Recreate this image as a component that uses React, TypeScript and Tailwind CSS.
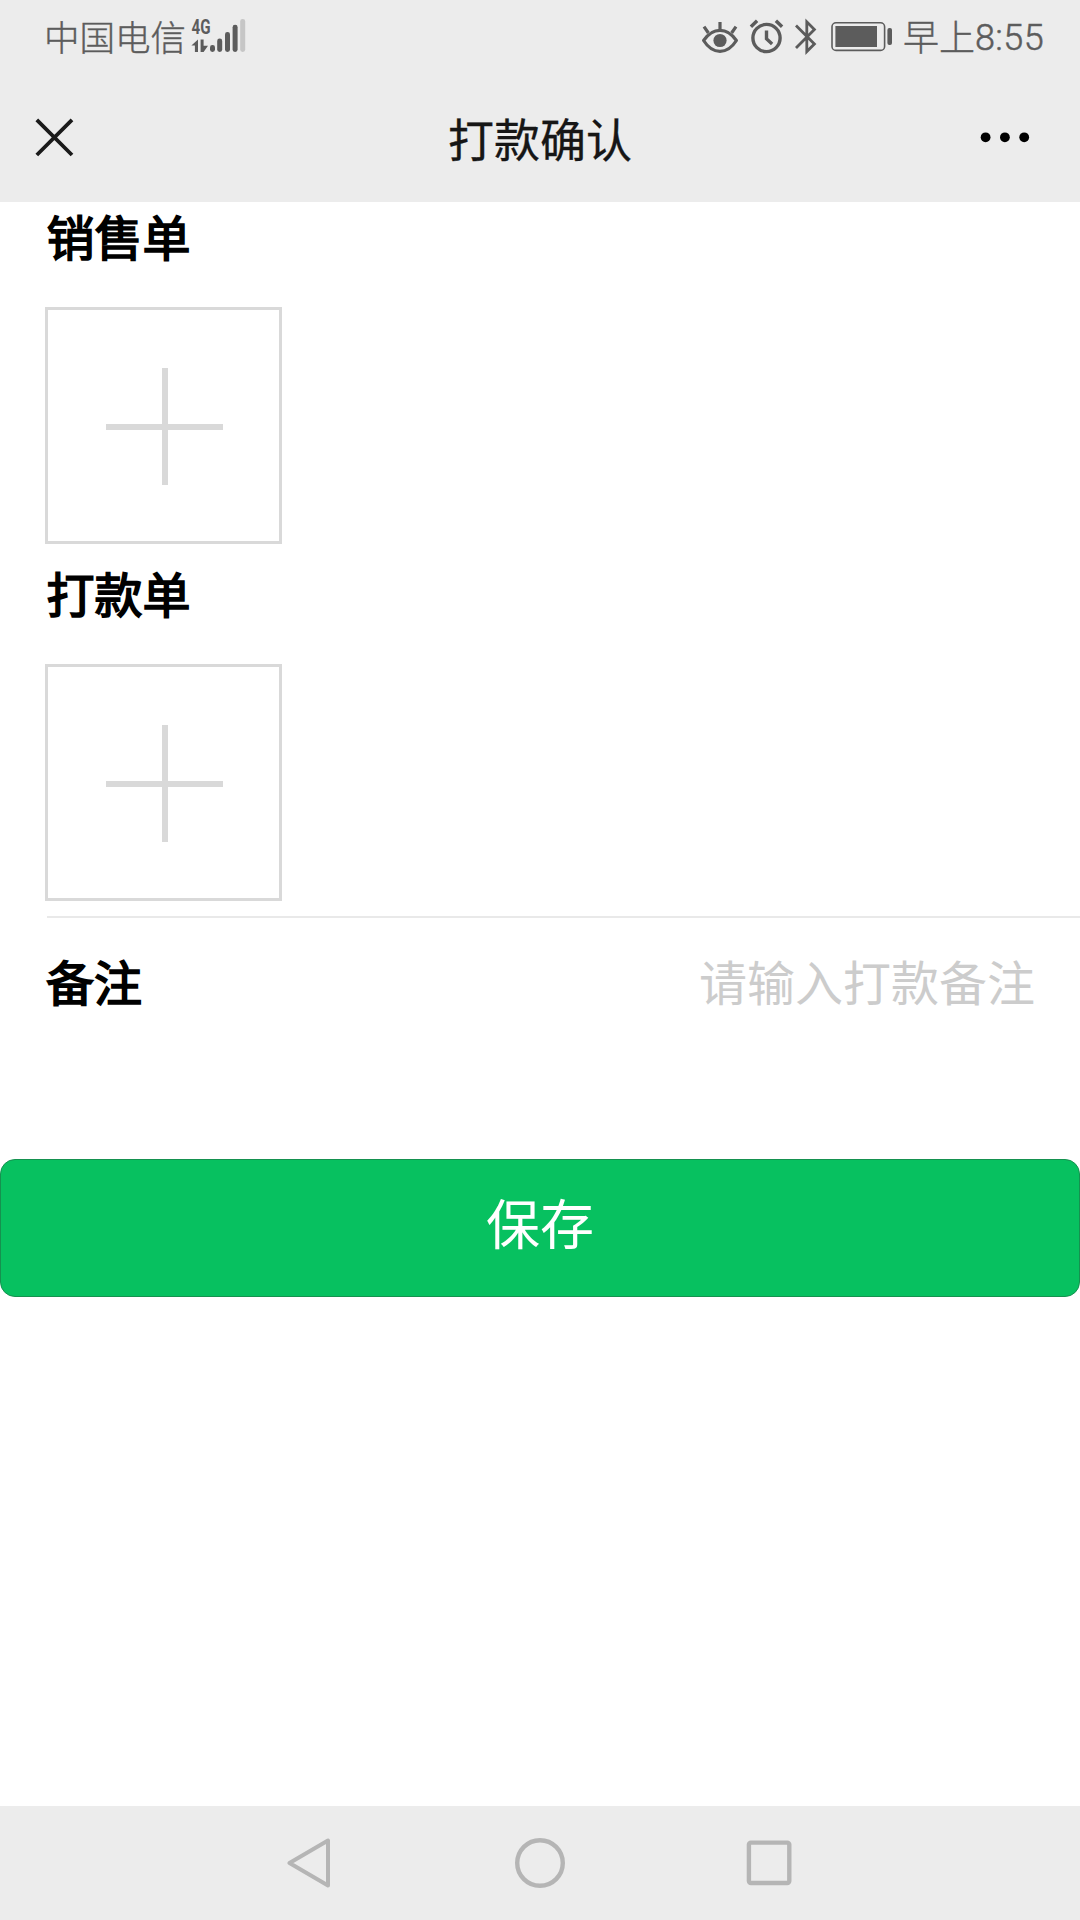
import React from "react";

const cjk = "font-['Noto_Sans_CJK_SC',sans-serif]";

function SignalIcon() {
  return (
    <svg className="h-[40px] w-[60px] shrink-0" viewBox="0 0 60 40" fill="#5c5c5c">
      <text x="1.5" y="18.6" fontFamily="Roboto, sans-serif" fontWeight="700" fontSize="20.5" textLength="19" lengthAdjust="spacingAndGlyphs">
        4G
      </text>
      <path d="M1.4 30.4 8 24.4V37H4.9V30.4ZM10.6 24.4H13.6V30.8H18L13.6 37H10.6Z" />
      <rect x="20" y="30" width="5" height="7" rx="2.4" />
      <rect x="27.2" y="23.6" width="5" height="13.4" rx="2.4" />
      <rect x="35" y="17" width="5" height="20" rx="2.4" />
      <rect x="42.6" y="9.8" width="5" height="27.2" rx="2.4" />
      <rect x="50.2" y="4" width="5" height="33" rx="2.4" fill="#c6c6c6" />
    </svg>
  );
}

function EyeIcon() {
  return (
    <svg className="h-[40px] w-[38px]" viewBox="0 0 38 40" fill="none" stroke="#5c5c5c" strokeWidth="3.2">
      <path d="M2.6 24.5C7.5 17.5 13 14.4 19 14.4S30.5 17.5 35.4 24.5C31 31.5 25.5 35.3 19 35.3S7 31.5 2.6 24.5Z" strokeLinejoin="round" />
      <path d="M19 14V6M7.4 17 3 10.6M30.6 17 35 10.6" />
      <circle cx="19" cy="24.5" r="6.6" fill="#5c5c5c" stroke="none" />
    </svg>
  );
}

function AlarmIcon() {
  return (
    <svg className="h-[40px] w-[36px]" viewBox="0 0 36 40" fill="none" stroke="#5c5c5c" strokeWidth="3.4">
      <circle cx="17.5" cy="22" r="13.6" />
      <path d="M17.5 14.4V22.8L23.1 28" />
      <path d="M1.9 10.8 8.1 4.8M33.1 10.8 26.9 4.8" />
    </svg>
  );
}

function BluetoothIcon() {
  return (
    <svg className="h-[40px] w-[22px]" viewBox="0 0 22 40" fill="none" stroke="#5c5c5c" strokeWidth="2.8">
      <path d="M1 9.6 19.4 28 11.8 35.6V5.8L19.4 13.4 1 32" />
    </svg>
  );
}

function BatteryIcon() {
  return (
    <svg className="h-[40px] w-[62px]" viewBox="0 0 62 40">
      <rect x="1" y="6.8" width="52.6" height="27.6" rx="4" fill="none" stroke="#5c5c5c" strokeWidth="1.6" />
      <rect x="4.4" y="10" width="41.6" height="21" fill="#5c5c5c" />
      <rect x="56.4" y="12" width="4.6" height="17" rx="2" fill="#5c5c5c" />
    </svg>
  );
}

function StatusBar() {
  return (
    <div className="flex h-[76px] items-start justify-between pl-[44px] pr-[36px] text-[#5c5c5c]">
      <div className="flex items-start">
        <span className={`${cjk} mt-[16px] w-[146px] whitespace-nowrap text-[35.5px] font-light leading-[40px] [-webkit-text-stroke:0.4px_#5c5c5c]`}>中国电信</span>
        <div className="mt-[15px]">
          <SignalIcon />
        </div>
      </div>
      <div className="flex items-start">
        <div className="mt-[16px] flex w-[201px] shrink-0">
          <EyeIcon />
          <div className="ml-[10px]"><AlarmIcon /></div>
          <div className="ml-[10px]"><BluetoothIcon /></div>
          <div className="ml-[14px]"><BatteryIcon /></div>
        </div>
        <span className={`${cjk} mt-[15px] ml-[1px] text-[36px] font-light leading-[40px] [-webkit-text-stroke:0.4px_#5c5c5c]`}>早上</span>
        <span className="mt-[18px] w-[69px] font-['Roboto'] text-[36px] font-light leading-[40px] tracking-[0.4px] [-webkit-text-stroke:0.5px_#5c5c5c]">8:55</span>
      </div>
    </div>
  );
}

function TitleBar() {
  return (
    <div className="flex h-[125px] items-start justify-between pl-[35px] pr-[49px]">
      <svg className="mt-[42px] h-[40px] w-[80px]" viewBox="0 0 80 40" stroke="#1a1a1a" strokeWidth="3.8">
        <path d="M1.8 1.8 37 37M37 1.8 1.8 37" />
      </svg>
      <h1 className={`${cjk} mt-[31px] text-[46px] font-normal leading-[60px] text-[#161616] [-webkit-text-stroke:0.3px_#161616]`}>打款确认</h1>
      <svg className="mt-[51px] h-[20px] w-[66px]" viewBox="0 0 66 20" fill="#000">
        <circle cx="20.6" cy="10.3" r="4.9" />
        <circle cx="39.9" cy="10.3" r="4.9" />
        <circle cx="59.2" cy="10.3" r="4.9" />
      </svg>
    </div>
  );
}

function UploadField({ label }: { label: string }) {
  return (
    <section className="h-[357px] pl-[45px]">
      <h2 className={`${cjk} h-[105px] pt-[3px] pl-[1.5px] text-[48px] font-normal leading-[60px] text-black [-webkit-text-stroke:1.7px_#000]`}>{label}</h2>
      <button className="flex h-[237px] w-[237px] items-center justify-center border-[3px] border-[#d9d9d9]">
        <svg className="h-[119px] w-[119px]" viewBox="0 0 119 119" stroke="#d9d9d9" strokeWidth="6">
          <path d="M61 2V119M2 61H119" />
        </svg>
      </button>
    </section>
  );
}

function NavBar() {
  return (
    <nav className="flex h-[114px] shrink-0 items-start justify-center bg-[#ececec] pt-[31px]">
      <svg className="h-[52px] w-[46px]" viewBox="0 0 46 52" fill="none" stroke="#b5b5b5" strokeWidth="4" strokeLinejoin="round">
        <path d="M2.5 26 41 3.5V48.5Z" />
      </svg>
      <svg className="ml-[181px] h-[52px] w-[52px]" viewBox="0 0 52 52" fill="none" stroke="#b5b5b5" strokeWidth="4.4">
        <circle cx="26" cy="26" r="22.8" />
      </svg>
      <svg className="ml-[180px] mr-px h-[52px] w-[46px]" viewBox="0 0 46 52" fill="none" stroke="#b5b5b5" strokeWidth="4.4">
        <rect x="2.9" y="5.6" width="40.4" height="40.4" rx="2" />
      </svg>
    </nav>
  );
}

export default function App() {
  return (
    <div className="flex h-[1920px] w-[1080px] flex-col overflow-hidden bg-white">
      <header className="h-[202px] shrink-0 bg-[#ececec]">
        <StatusBar />
        <TitleBar />
      </header>
      <main className="flex-1">
        <UploadField label="销售单" />
        <UploadField label="打款单" />
        <div className="ml-[47px] flex h-[243px] items-start justify-between border-t-2 border-[#e9e9e9] pr-[45px] pt-[32px]">
          <label className={`${cjk} -ml-px text-[48px] font-normal leading-[60px] text-black [-webkit-text-stroke:1.7px_#000]`}>备注</label>
          <span className={`${cjk} text-[48px] font-normal leading-[60px] text-[#cccccc]`}>请输入打款备注</span>
        </div>
        <button className={`${cjk} flex h-[138px] w-full items-start justify-center rounded-[15px] border border-[#15914f] bg-[#07c160] pt-[27px] text-[54px] font-normal leading-[70px] text-white`}>
          保存
        </button>
      </main>
      <NavBar />
    </div>
  );
}
